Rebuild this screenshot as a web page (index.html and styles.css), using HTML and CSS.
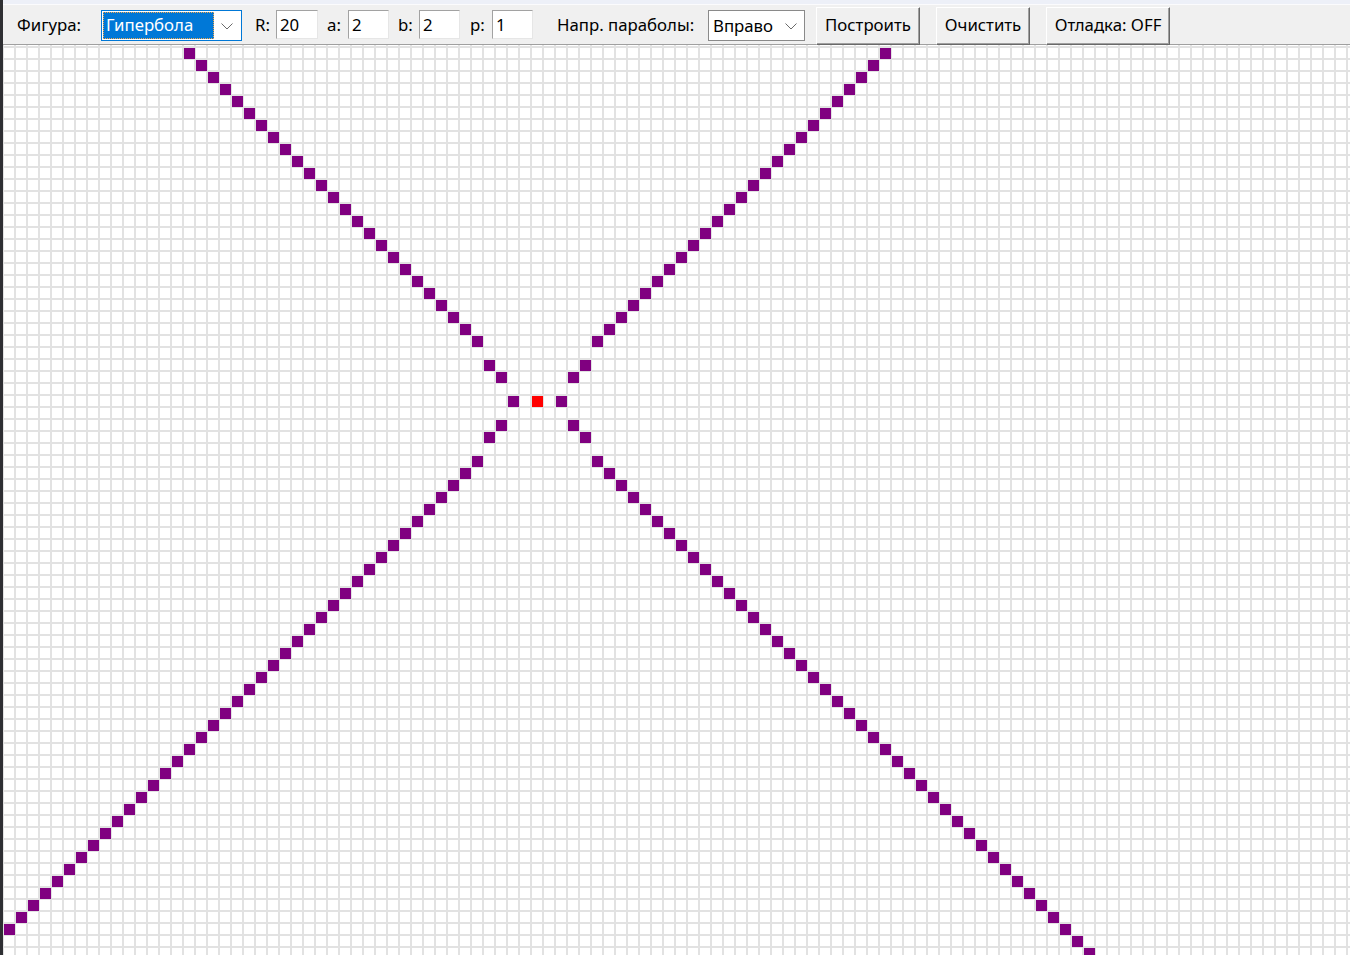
FILE: index.html
```html
<!DOCTYPE html>
<html lang="ru">
<head>
<meta charset="utf-8">
<title>Гипербола</title>
<link rel="stylesheet" href="styles.css">
</head>
<body>
<div class="app">
  <div class="edge"></div>
  <div class="main">
    <div class="topstrip"></div>
    <div class="toolbar">
      <span class="lbl lbl-fig">Фигура:</span>
      <div class="combo combo-focus">
        <span class="sel">Гипербола</span>
        <svg class="chev" width="12" height="7" viewBox="0 0 12 7"><polyline points="0.5,0.5 6,6 11.5,0.5" fill="none" stroke="#6a6a6a" stroke-width="1"/></svg>
      </div>
      <span class="lbl lbl-r">R:</span>
      <div class="field f-r">20</div>
      <span class="lbl lbl-a">a:</span>
      <div class="field">2</div>
      <span class="lbl lbl-b">b:</span>
      <div class="field">2</div>
      <span class="lbl lbl-p">p:</span>
      <div class="field">1</div>
      <span class="lbl lbl-dir">Напр. параболы:</span>
      <div class="combo combo-dir">
        <span class="val">Вправо</span>
        <svg class="chev" width="12" height="7" viewBox="0 0 12 7"><polyline points="0.5,0.5 6,6 11.5,0.5" fill="none" stroke="#6a6a6a" stroke-width="1"/></svg>
      </div>
      <button class="btn btn-build">Построить</button>
      <button class="btn btn-clear">Очистить</button>
      <button class="btn btn-debug">Отладка: OFF</button>
    </div>
    <div class="canvas" id="canvas">
      <div class="cell cell-center"></div>
    </div>
  </div>
</div>
<script src="script.js"></script>
</body>
</html>
```

FILE: styles.css
```css
html, body {
  margin: 0;
  padding: 0;
  width: 1350px;
  height: 955px;
  overflow: hidden;
  background: #ffffff;
}

.app {
  display: flex;
  width: 1350px;
  height: 955px;
  font-family: "Noto Sans", "Liberation Sans", sans-serif;
  font-size: 16.8px;
  color: #000;
}

.edge {
  width: 3px;
  flex: none;
  background: #2e2f33;
}

.main {
  flex: 1;
  display: flex;
  flex-direction: column;
  min-width: 0;
}

.topstrip {
  height: 4px;
  background: #edf0f8;
  border-bottom: 1px solid #fbfbfd;
  flex: none;
}

.toolbar {
  flex: none;
  height: 40px;
  box-sizing: border-box;
  background: #f0f0f0;
  border-bottom: 1px solid #a0a0a0;
  display: flex;
  align-items: flex-start;
  padding-left: 14px;
  position: relative;
  z-index: 2;
}

.lbl {
  margin-top: 4px;
  height: 31px;
  line-height: 31px;
  white-space: nowrap;
  flex: none;
}

.lbl-fig { width: 84px; }
.lbl-r { margin-left: 13px; width: 21px; }
.lbl-a { margin-left: 9px; width: 21px; }
.lbl-b { margin-left: 9px; width: 21px; }
.lbl-p { margin-left: 10px; width: 22px; }
.lbl-dir { margin-left: 24px; width: 151px; }

.combo {
  flex: none;
  margin-top: 5px;
  height: 31px;
  box-sizing: border-box;
  background: #ffffff;
  display: flex;
  align-items: center;
}

.combo-focus {
  width: 141px;
  border: 1px solid #0078d7;
  padding: 1px;
}

.combo-dir {
  width: 97px;
  border: 1px solid #8a8a8a;
  padding-left: 4px;
}

.sel {
  width: 111px;
  height: 27px;
  box-sizing: border-box;
  background: #0078d7;
  color: #ffffff;
  outline: 1px dotted #f2a94e;
  outline-offset: -1px;
  padding-left: 3px;
  line-height: 25px;
  white-space: nowrap;
}

.val {
  line-height: 27px;
  white-space: nowrap;
}

.chev {
  margin-left: auto;
  margin-right: 7px;
  margin-top: 1px;
  flex: none;
}

.field {
  flex: none;
  margin-top: 5px;
  width: 41px;
  height: 29px;
  box-sizing: border-box;
  background: #ffffff;
  border-top: 1px solid #a2a2a2;
  border-left: 1px solid #a2a2a2;
  border-right: 1px solid #e6e6e6;
  border-bottom: 1px solid #e6e6e6;
  padding-left: 3px;
  line-height: 27px;
}

.f-r { width: 42px; }

.btn {
  flex: none;
  margin-top: 2px;
  height: 38px;
  box-sizing: border-box;
  background: #f0f0f0;
  border: 1px solid;
  border-color: #ffffff #696969 #696969 #ffffff;
  box-shadow: inset -1px -1px 0 #a0a0a0;
  font-family: inherit;
  font-size: 16.8px;
  line-height: 30px;
  padding: 0 0 2px 0;
  color: #000;
  white-space: nowrap;
}

.btn-build { margin-left: 11px; width: 104px; }
.btn-clear { margin-left: 16px; width: 94px; }
.btn-debug { margin-left: 16px; width: 124px; }

.canvas {
  flex: 1;
  position: relative;
  overflow: hidden;
  background-color: #ffffff;
  background-image:
    linear-gradient(to right, #e2e2e2 0 2px, transparent 2px),
    linear-gradient(to bottom, #e2e2e2 0 2px, transparent 2px);
  background-size: 12px 12px;
  background-position: 11px 1px;
}

.cell {
  position: absolute;
  width: 11px;
  height: 11px;
  background: #800080;
}

.cell-center {
  left: 529px;
  top: 351px;
  background: #ff0000;
}
```

FILE: script.js
```js
(function () {
  var canvas = document.getElementById('canvas');
  var W = canvas.clientWidth;
  var H = canvas.clientHeight;
  var OX = 529, OY = 351, STEP = 12;
  var seen = {};
  function put(c, r) {
    var key = c + ',' + r;
    if (seen[key]) return;
    seen[key] = true;
    var left = OX + STEP * c;
    var top = OY + STEP * r;
    if (top < 0 || top >= H || left <= -11 || left >= W) return;
    var d = document.createElement('div');
    d.className = 'cell';
    d.style.left = left + 'px';
    d.style.top = top + 'px';
    canvas.appendChild(d);
  }
  var a = 2, b = 2;
  for (var x = a; x <= 80; x++) {
    var y = Math.round(b * Math.sqrt(x * x / (a * a) - 1));
    put(x, y); put(-x, y); put(x, -y); put(-x, -y);
  }
})();
```
